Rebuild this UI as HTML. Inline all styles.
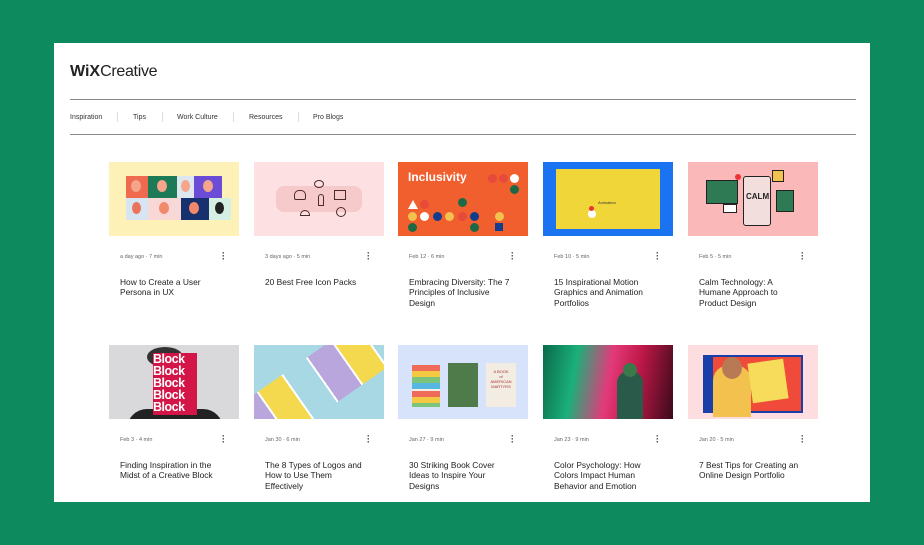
<!DOCTYPE html>
<html><head><meta charset="utf-8"><style>
*{margin:0;padding:0;box-sizing:border-box}
body{width:924px;height:545px;background:#0e8a5f;font-family:"Liberation Sans",sans-serif;position:relative;overflow:hidden}
.panel{position:absolute;left:54px;top:43px;width:816px;height:459px;background:#fff}
.logo{position:absolute;left:70px;top:63px;font-size:16px;color:#222;letter-spacing:-0.3px}
.logo b{font-weight:900;letter-spacing:0}
.hr{position:absolute;left:70px;width:786px;height:1px;background:#888}
.nav{position:absolute;top:114px;font-size:7px;color:#333}
.sep{position:absolute;top:112px;width:1px;height:10px;background:#ddd}
.card{position:absolute;width:130px}
.img{width:130px;height:74px;position:relative;overflow:hidden}
.meta{position:absolute;top:92px;left:11px;font-size:5.5px;color:#666}
.dots{position:absolute;top:90px;left:113px;width:2px;font-size:9px;line-height:3px;color:#333;font-weight:bold}
.title{position:absolute;top:115px;left:11px;width:104px;font-size:8.4px;line-height:10.3px;color:#222}
.a{position:absolute}
</style></head><body>
<div class="panel"></div>
<div class="logo"><b>WiX</b>Creative</div>
<div class="hr" style="top:99px"></div>
<div class="hr" style="top:134px"></div>
<div class="nav" style="left:70px">Inspiration</div><div class="sep" style="left:117px"></div>
<div class="nav" style="left:133px">Tips</div><div class="sep" style="left:162px"></div>
<div class="nav" style="left:177px">Work Culture</div><div class="sep" style="left:233px"></div>
<div class="nav" style="left:249px">Resources</div><div class="sep" style="left:298px"></div>
<div class="nav" style="left:313px">Pro Blogs</div>

<!-- row 1 -->
<div class="card" style="left:109px;top:162px">
 <div class="img" style="background:#fdf1b8">
  <div class="a" style="left:17px;top:14px;width:22px;height:22px;background:#ef6a4f"></div>
  <div class="a" style="left:39px;top:14px;width:29px;height:22px;background:#1d7a56"></div>
  <div class="a" style="left:68px;top:14px;width:17px;height:22px;background:#dce7f0"></div>
  <div class="a" style="left:85px;top:14px;width:28px;height:22px;background:#6a4cd6"></div>
  <div class="a" style="left:17px;top:36px;width:22px;height:22px;background:#d7e4f2"></div>
  <div class="a" style="left:39px;top:36px;width:33px;height:22px;background:#f7d8d6"></div>
  <div class="a" style="left:72px;top:36px;width:28px;height:22px;background:#17306e"></div>
  <div class="a" style="left:100px;top:36px;width:22px;height:22px;background:#d5f0e2"></div>
  <div class="a" style="left:22px;top:18px;width:10px;height:12px;border-radius:50%;background:#f4a58a"></div>
  <div class="a" style="left:48px;top:18px;width:10px;height:12px;border-radius:50%;background:#f4a58a"></div>
  <div class="a" style="left:72px;top:18px;width:9px;height:12px;border-radius:50%;background:#f4a58a"></div>
  <div class="a" style="left:94px;top:18px;width:10px;height:12px;border-radius:50%;background:#f4a58a"></div>
  <div class="a" style="left:23px;top:40px;width:9px;height:12px;border-radius:50%;background:#e9735b"></div>
  <div class="a" style="left:50px;top:40px;width:10px;height:12px;border-radius:50%;background:#f08a6a"></div>
  <div class="a" style="left:80px;top:40px;width:10px;height:12px;border-radius:50%;background:#f08a6a"></div>
  <div class="a" style="left:106px;top:40px;width:9px;height:12px;border-radius:50%;background:#222"></div>
 </div>
 <div class="meta">a day ago · 7 min</div><div class="dots">·<br>·<br>·</div>
 <div class="title">How to Create a User Persona in UX</div>
</div>
<div class="card" style="left:254px;top:162px">
 <div class="img" style="background:#fde0e2">
  <div class="a" style="left:22px;top:24px;width:86px;height:26px;background:#f6c9cb;border-radius:8px"></div>
  <div class="a" style="left:40px;top:28px;width:12px;height:10px;border:1.5px solid #4a2a2a;border-radius:5px 5px 2px 2px"></div>
  <div class="a" style="left:80px;top:28px;width:12px;height:10px;border:1.5px solid #4a2a2a"></div>
  <div class="a" style="left:82px;top:45px;width:10px;height:10px;border:1.5px solid #4a2a2a;border-radius:50%"></div>
  <div class="a" style="left:60px;top:18px;width:10px;height:8px;border:1.5px solid #4a2a2a;border-radius:50%"></div>
  <div class="a" style="left:46px;top:48px;width:10px;height:6px;border:1.5px solid #4a2a2a;border-radius:6px 6px 0 0"></div>
  <div class="a" style="left:64px;top:32px;width:6px;height:12px;border:1.5px solid #4a2a2a;border-radius:3px 3px 0 0"></div>
 </div>
 <div class="meta">3 days ago · 5 min</div><div class="dots">·<br>·<br>·</div>
 <div class="title">20 Best Free Icon Packs</div>
</div>
<div class="card" style="left:398px;top:162px">
 <div class="img" style="background:#f15f2e">
  <div class="a" style="left:10px;top:8px;color:#fff;font-weight:bold;font-size:12px">Inclusivity</div>
  <div class="a" style="left:90px;top:12px;width:9px;height:9px;border-radius:50%;background:#e64a3a"></div>
  <div class="a" style="left:101px;top:12px;width:9px;height:9px;border-radius:50%;background:#e64a3a"></div>
  <div class="a" style="left:112px;top:12px;width:9px;height:9px;border-radius:50%;background:#fff"></div>
  <div class="a" style="left:112px;top:23px;width:9px;height:9px;border-radius:50%;background:#1c6a45"></div>
  <div class="a" style="left:10px;top:38px;width:0;height:0;border-left:5px solid transparent;border-right:5px solid transparent;border-bottom:9px solid #fff"></div>
  <div class="a" style="left:22px;top:38px;width:9px;height:9px;border-radius:50%;background:#e64a3a"></div>
  <div class="a" style="left:60px;top:36px;width:9px;height:9px;border-radius:50%;background:#1c6a45"></div>
  <div class="a" style="left:10px;top:50px;width:9px;height:9px;border-radius:50%;background:#f2c14e"></div>
  <div class="a" style="left:22px;top:50px;width:9px;height:9px;border-radius:50%;background:#fff"></div>
  <div class="a" style="left:35px;top:50px;width:9px;height:9px;border-radius:50%;background:#123d8c"></div>
  <div class="a" style="left:47px;top:50px;width:9px;height:9px;border-radius:50%;background:#f2c14e"></div>
  <div class="a" style="left:60px;top:50px;width:9px;height:9px;border-radius:50%;background:#e64a3a"></div>
  <div class="a" style="left:72px;top:50px;width:9px;height:9px;border-radius:50%;background:#123d8c"></div>
  <div class="a" style="left:97px;top:50px;width:9px;height:9px;border-radius:50%;background:#f2c14e"></div>
  <div class="a" style="left:10px;top:61px;width:9px;height:9px;border-radius:50%;background:#1c6a45"></div>
  <div class="a" style="left:72px;top:61px;width:9px;height:9px;border-radius:50%;background:#1c6a45"></div>
  <div class="a" style="left:97px;top:61px;width:8px;height:8px;background:#123d8c"></div>
 </div>
 <div class="meta">Feb 12 · 6 min</div><div class="dots">·<br>·<br>·</div>
 <div class="title">Embracing Diversity: The 7 Principles of Inclusive Design</div>
</div>
<div class="card" style="left:543px;top:162px">
 <div class="img" style="background:#1a73f0">
  <div class="a" style="left:13px;top:7px;width:104px;height:60px;background:#f1d63a"></div>
  <div class="a" style="left:55px;top:38px;font-size:4px;color:#333">Animation</div>
  <div class="a" style="left:45px;top:48px;width:8px;height:8px;border-radius:50%;background:#fff"></div>
  <div class="a" style="left:46px;top:44px;width:5px;height:5px;border-radius:50%;background:#e33"></div>
 </div>
 <div class="meta">Feb 10 · 5 min</div><div class="dots">·<br>·<br>·</div>
 <div class="title">15 Inspirational Motion Graphics and Animation Portfolios</div>
</div>
<div class="card" style="left:688px;top:162px">
 <div class="img" style="background:#fbb8b8">
  <div class="a" style="left:18px;top:18px;width:32px;height:24px;background:#2d7a55;border:1px solid #222"></div>
  <div class="a" style="left:55px;top:14px;width:28px;height:50px;background:#f3dede;border:1px solid #222;border-radius:3px"></div>
  <div class="a" style="left:58px;top:30px;font-size:8px;font-weight:bold;color:#222">CALM</div>
  <div class="a" style="left:84px;top:8px;width:12px;height:12px;background:#f2c14e;border:1px solid #222"></div>
  <div class="a" style="left:88px;top:28px;width:18px;height:22px;background:#2d7a55;border:1px solid #222"></div>
  <div class="a" style="left:47px;top:12px;width:6px;height:6px;border-radius:50%;background:#e33"></div>
  <div class="a" style="left:35px;top:42px;width:14px;height:9px;background:#fff;border:1px solid #222"></div>
 </div>
 <div class="meta">Feb 5 · 5 min</div><div class="dots">·<br>·<br>·</div>
 <div class="title">Calm Technology: A Humane Approach to Product Design</div>
</div>

<!-- row 2 -->
<div class="card" style="left:109px;top:345px">
 <div class="img" style="background:#d9d9dc">
  <div class="a" style="left:38px;top:2px;width:36px;height:20px;border-radius:50%;background:#333"></div>
  <div class="a" style="left:18px;top:64px;width:96px;height:20px;border-radius:40px 40px 0 0;background:#222"></div>
  <div class="a" style="left:44px;top:8px;width:44px;height:62px;background:#d31548;color:#fff;font-weight:900;font-size:12.5px;line-height:12px;overflow:hidden;letter-spacing:-0.5px">Block<br>Block<br>Block<br>Block<br>Block</div>
 </div>
 <div class="meta">Feb 3 · 4 min</div><div class="dots">·<br>·<br>·</div>
 <div class="title">Finding Inspiration in the Midst of a Creative Block</div>
</div>
<div class="card" style="left:254px;top:345px">
 <div class="img" style="background:#a8d8e4">
  <div class="a" style="left:-20px;top:10px;width:170px;height:54px;transform:rotate(-35deg);background:repeating-linear-gradient(90deg,#b9a6dc 0 28px,#fff 28px 30px,#f4d84e 30px 58px,#fff 58px 60px,#a8d8e4 60px 88px,#fff 88px 90px)"></div>
 </div>
 <div class="meta">Jan 30 · 6 min</div><div class="dots">·<br>·<br>·</div>
 <div class="title">The 8 Types of Logos and How to Use Them Effectively</div>
</div>
<div class="card" style="left:398px;top:345px">
 <div class="img" style="background:#d6e3fb">
  <div class="a" style="left:14px;top:20px;width:28px;height:42px;background:repeating-linear-gradient(180deg,#f06a5a 0 6px,#f4c842 6px 12px,#7cc47a 12px 18px,#56b8e0 18px 24px,#f3efe7 24px 26px)"></div>
  <div class="a" style="left:50px;top:18px;width:30px;height:44px;background:#4f7a4a"></div>
  <div class="a" style="left:88px;top:18px;width:30px;height:44px;background:#f2ece2;font-size:4px;color:#a33;text-align:center;padding-top:6px">A BOOK<br>of<br>AMERICAN<br>MARTYRS</div>
 </div>
 <div class="meta">Jan 27 · 9 min</div><div class="dots">·<br>·<br>·</div>
 <div class="title">30 Striking Book Cover Ideas to Inspire Your Designs</div>
</div>
<div class="card" style="left:543px;top:345px">
 <div class="img" style="background:linear-gradient(100deg,#0a6a4a 0%,#1ab07a 25%,#e33a7a 50%,#c01848 70%,#3a0a1a 100%)">
  <div class="a" style="left:74px;top:26px;width:26px;height:48px;border-radius:12px 12px 0 0;background:#2a5a4a"></div>
  <div class="a" style="left:80px;top:18px;width:14px;height:14px;border-radius:50%;background:#3a7a4a"></div>
 </div>
 <div class="meta">Jan 23 · 9 min</div><div class="dots">·<br>·<br>·</div>
 <div class="title">Color Psychology: How Colors Impact Human Behavior and Emotion</div>
</div>
<div class="card" style="left:688px;top:345px">
 <div class="img" style="background:#fddde0">
  <div class="a" style="left:15px;top:10px;width:100px;height:58px;background:#1a3fa8"></div>
  <div class="a" style="left:25px;top:12px;width:88px;height:54px;background:#f04a3a"></div>
  <div class="a" style="left:25px;top:20px;width:38px;height:52px;background:#f2c14e;border-radius:16px 16px 0 0"></div>
  <div class="a" style="left:34px;top:12px;width:20px;height:22px;border-radius:50%;background:#b77a55"></div>
  <div class="a" style="left:62px;top:16px;width:36px;height:40px;background:#f6dc5a;transform:rotate(-8deg)"></div>
 </div>
 <div class="meta">Jan 20 · 5 min</div><div class="dots">·<br>·<br>·</div>
 <div class="title">7 Best Tips for Creating an Online Design Portfolio</div>
</div>
</body></html>
